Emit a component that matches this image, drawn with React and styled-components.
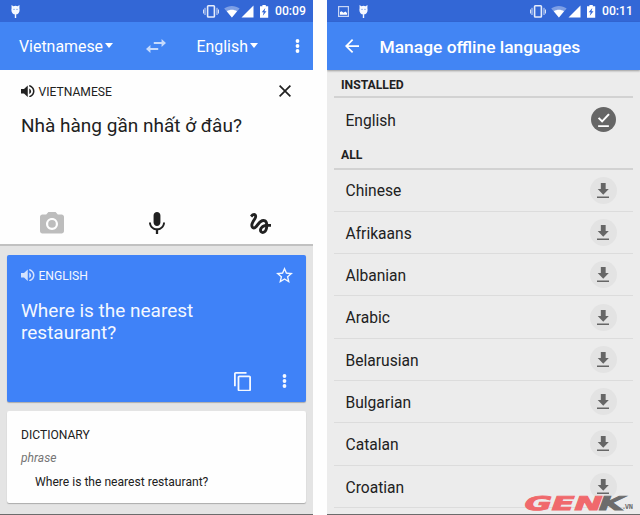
import React from "react";
import styled, { createGlobalStyle } from "styled-components";

const GlobalStyle = createGlobalStyle`
  * { box-sizing: border-box; }
  body { margin: 0; background: #fefefe; font-family: Roboto, "Noto Sans", sans-serif; color: #212121; overflow: hidden; }
  svg { display: block; flex: none; }
`;

const Page = styled.div`
  display: flex;
  justify-content: space-between;
  width: 640px;
  height: 515px;
  overflow: hidden;
`;

const Phone = styled.section`
  position: relative;
  display: flex;
  flex-direction: column;
  width: 313px;
  height: 515px;
  overflow: hidden;
  background: ${(p) => p.$bg};
  border-bottom: 1px solid #6c6c6c;
`;

const StatusBar = styled.div`
  display: flex;
  flex: none;
  align-items: center;
  height: 22px;
  padding: 0 8px 0 11px;
  background: #3367d6;
  color: #fff;
`;

const Notifications = styled.div`
  display: flex;
  align-items: center;
  gap: 10px;
  margin-right: auto;
`;

const Clock = styled.span`
  width: 30px;
  margin-left: 5px;
  font-size: 12.2px;
  font-weight: 500;
  line-height: 23px;
  white-space: nowrap;
`;

const AppBar = styled.header`
  position: relative;
  display: flex;
  flex: none;
  align-items: center;
  height: 48px;
  padding: 0 13px 0 18px;
  background: #4285f4;
  color: #fff;
  box-shadow: ${(p) => (p.$raised ? "0 1px 2px rgba(0,0,0,.35)" : "none")};
`;

const LanguagePicker = styled.div`
  display: flex;
  align-items: center;
  gap: 2px;
  width: ${(p) => p.$width}px;
  margin-left: ${(p) => p.$offset || 0}px;
  padding-top: 2px;
  font-size: 15.9px;
  line-height: 20px;
  white-space: nowrap;
`;

const Caret = styled.i`
  margin-top: -3px;
  border: 4.5px solid transparent;
  border-top: 5px solid #fff;
  border-bottom: 0;
`;

const SwapSlot = styled.div`
  margin-left: 10px;
`;

const MoreSlot = styled.div`
  margin-left: auto;
`;

const Title = styled.h1`
  margin: 1px 0 0 20.5px;
  font-size: 17.4px;
  font-weight: 500;
  line-height: 24px;
  white-space: nowrap;
`;

const SourcePane = styled.div`
  display: flex;
  flex: none;
  flex-direction: column;
  height: 176px;
  padding: 11px 21px 0;
  background: #fefefe;
  border-bottom: 2px solid #c1c1c1;
`;

const LabelRow = styled.div`
  display: flex;
  align-items: center;
  gap: 4px;
  height: 20px;
  font-size: 12.1px;
  line-height: 20px;
`;

const LabelText = styled.span`
  padding-top: 1px;
`;

const LabelAction = styled.div`
  margin-left: auto;
  margin-right: ${(p) => p.$inset || 0}px;
`;

const Phrase = styled.p`
  margin: ${(p) => p.$top}px 0 0;
  font-size: ${(p) => p.$size}px;
  line-height: ${(p) => p.$line}px;
`;

const InputTools = styled.div`
  display: flex;
  align-items: center;
  justify-content: space-between;
  height: 22px;
  margin: auto 21px 10px 19px;
`;

const Results = styled.div`
  display: flex;
  flex-direction: column;
  gap: 9px;
  padding: 9px 7px 0;
`;

const TranslationCard = styled.article`
  display: flex;
  flex-direction: column;
  height: 147px;
  padding: 10px 13px 11px 14px;
  border-radius: 2px;
  background: #3f82f8;
  color: #f4f8ff;
  box-shadow: 0 1px 1px rgba(0, 0, 0, 0.25);
`;

const CardActions = styled.div`
  display: flex;
  align-items: center;
  justify-content: flex-end;
  gap: 31px;
  margin: auto 6px 0 0;
`;

const DictionaryCard = styled.article`
  height: 92px;
  padding: 14px 14px;
  border-radius: 2px;
  background: #fefefe;
  box-shadow: 0 1px 1px rgba(0, 0, 0, 0.25);
  font-size: 12.1px;
  line-height: 20px;
`;

const WordClass = styled.div`
  margin-top: 3px;
  color: #757575;
  font-style: italic;
`;

const Meaning = styled.div`
  margin: 4px 0 0 14px;
`;

const LanguageList = styled.div`
  padding: 0 7px;
`;

const GroupHeading = styled.h2`
  height: ${(p) => p.$height}px;
  margin: 0;
  padding: ${(p) => p.$top}px 7px 0;
  border-bottom: 2px solid #d2d2d2;
  font-size: 12.2px;
  font-weight: 700;
  line-height: 16px;
`;

const LanguageRow = styled.div`
  display: flex;
  align-items: center;
  justify-content: space-between;
  height: ${(p) => (p.$last ? 44.5 : 42.3)}px;
  padding: ${(p) => (p.$last ? 0 : 1)}px 16.5px 0 11.5px;
  border-bottom: ${(p) => (p.$last ? 0 : 1)}px solid #dcdcdc;
  font-size: 15.6px;
  line-height: 20px;
`;

const LanguageName = styled.span`
  padding-top: 1.6px;
`;

const StatusDisc = styled.div`
  display: grid;
  place-items: center;
  width: 27px;
  height: 27px;
  margin-top: -1px;
  border-radius: 50%;
  background: ${(p) => (p.$plain ? "transparent" : "#e3e3e3")};
  color: #666;
`;

const Watermark = styled.div`
  position: absolute;
  left: 192px;
  top: 490px;
`;

const Glyph = ({ box, w, h, d, color = "currentColor", children }) => (
  <svg width={w} height={h} viewBox={box} fill={color} preserveAspectRatio="none">
    {d && <path d={d} />}
    {children}
  </svg>
);

const Speaker = ({ color }) => (
  <Glyph color={color} box="3 3.2 18 17.6" w={13.5} h={12.5} d="M3 9v6h4l5 5V4L7 9H3zm13.5 3c0-1.77-1.02-3.29-2.5-4.03v8.05c1.48-.73 2.5-2.25 2.5-4.02zM14 3.23v2.06c2.89.86 5 3.54 5 6.71s-2.11 5.85-5 6.71v2.06c4.01-.91 7-4.49 7-8.77s-2.99-7.86-7-8.77z" />
);

const MoreDots = ({ color }) => (
  <Glyph box="0 0 5 14" w={5} h={14} color={color}>
    <circle cx="2.5" cy="2" r="1.9" />
    <circle cx="2.5" cy="7" r="1.9" />
    <circle cx="2.5" cy="12" r="1.9" />
  </Glyph>
);

const RobotIcon = () => (
  <Glyph box="0 0 9 13" w={9} h={13} color="#f5f8ff">
    <path d="M.5 0 2.4 1.3a5 5 0 0 1 4.2 0L8.5 0 8.4 3.2C9.2 6.6 7.6 9.4 4.5 9.4S-.2 6.6.6 3.2zM3.8 9h1.4v4H3.8z" />
    <circle cx="3" cy="4.2" r=".55" fill="#3367d6" />
    <circle cx="6" cy="4.2" r=".55" fill="#3367d6" />
  </Glyph>
);

const PictureIcon = () => (
  <svg width="11" height="11" viewBox="0 0 11 11">
    <rect x=".6" y=".6" width="9.8" height="9.8" fill="none" stroke="#c8d6f5" strokeWidth="1.2" />
    <path d="M2 8.8V6l1.6-.8 1.8 1.6L7.4 5.6 9 7v1.8z" fill="#fff" />
  </svg>
);

const SystemIcons = () => (
  <svg width="67" height="13" viewBox="0 0 67 13" fill="#fff">
    <rect x="4.6" y=".8" width="6.8" height="11.2" rx=".8" fill="none" stroke="#e7edfb" strokeWidth="1.6" />
    <path d="M2 2.8v7.2M14 2.8v7.2M.5 4.5v4M15.5 4.5v4" stroke="#d5e0f8" strokeWidth="1" />
    <path d="M21.2 3.6C25.5.1 32.3.1 36.6 3.6L28.9 12.5z" fill="#7e9fe5" />
    <path d="M23.8 6.3c2.9-2 7.3-2 10.2 0l-5.1 6.2z" />
    <path d="M38.5 12.5H50.5V.5z" />
    <path d="M57 1.2h2.4V0h3.4v1.2h2.4v11.6H57z" />
    <path d="m62.3 3-3.6 4.3h2l-.9 3.5 3.7-4.5h-2z" fill="#3367d6" />
  </svg>
);

const DownloadIcon = () => (
  <Glyph box="5 3 14 17" w={12.5} h={15} d="M18.2 9.8h-3.5V3H9.3v6.8H5.8l6.2 6.4 6.2-6.4zM5 18.2V20h14v-1.8H5z" />
);

const InstalledIcon = () => (
  <Glyph box="2 2 20 20" w={25} h={25}>
    <circle cx="12" cy="12" r="10" fill="#666" />
    <path d="M16.3 16.5v1.4H7.7v-1.4zM10.9 14.6 7.5 11.2l1.1-1.1 2.3 2.3 4.9-5.3L17 8.2z" fill="#fff" />
  </Glyph>
);

const Status = ({ time, picture }) => (
  <StatusBar>
    <Notifications>
      {picture && <PictureIcon />}
      <RobotIcon />
    </Notifications>
    <SystemIcons />
    <Clock>{time}</Clock>
  </StatusBar>
);

const languages = ["Chinese", "Afrikaans", "Albanian", "Arabic", "Belarusian", "Bulgarian", "Catalan", "Croatian"];

const TranslateScreen = () => (
  <Phone $bg="#e4e4e4">
    <Status time="00:09" />
    <AppBar>
      <LanguagePicker $width={117} $offset={1}>Vietnamese<Caret /></LanguagePicker>
      <SwapSlot>
        <Glyph box="3 5 18 14" w={20} h={14} color="#c6dafc" d="M6.99 11L3 15l3.99 4v-3H14v-2H6.99v-3zM21 9l-3.99-4v3H10v2h7.01v3L21 9z" />
      </SwapSlot>
      <LanguagePicker $width={80} $offset={30.5}>English<Caret /></LanguagePicker>
      <MoreSlot><MoreDots /></MoreSlot>
    </AppBar>
    <SourcePane>
      <LabelRow>
        <Speaker />
        <LabelText>VIETNAMESE</LabelText>
        <LabelAction $inset={1}>
          <Glyph box="5 5 14 14" w={12} h={12} d="M19 6.41L17.59 5 12 10.59 6.41 5 5 6.41 10.59 12 5 17.59 6.41 19 12 13.41 17.59 19 19 17.59 13.41 12z" />
        </LabelAction>
      </LabelRow>
      <Phrase $top={13} $size={19} $line={23}>Nhà hàng gần nhất ở đâu?</Phrase>
      <InputTools>
        <Glyph box="2 2 20 18" w={24} h={21.5} color="#bdbdbd">
          <circle cx="12" cy="12" r="3.2" />
          <path d="M9 2L7.17 4H4c-1.1 0-2 .9-2 2v12c0 1.1.9 2 2 2h16c1.1 0 2-.9 2-2V6c0-1.1-.9-2-2-2h-3.17L15 2H9zm3 15c-2.76 0-5-2.24-5-5s2.24-5 5-5 5 2.24 5 5-2.24 5-5 5z" />
        </Glyph>
        <Glyph box="5 2 14 19" w={16} h={22} d="M12 14c1.66 0 2.99-1.34 2.99-3L15 5c0-1.66-1.34-3-3-3S9 3.34 9 5v6c0 1.66 1.34 3 3 3zm5.3-3c0 3-2.54 5.1-5.3 5.1S6.7 14 6.7 11H5c0 3.41 2.72 6.23 6 6.72V21h2v-3.28c3.28-.48 6-3.3 6-6.72h-1.7z" />
        <Glyph box="2.8 3 18.2 18" w={21} h={21} d="M4.59 6.89c.7-.71 1.4-1.35 1.71-1.22.5.2 0 1.03-.3 1.52-.25.42-2.86 3.89-2.86 6.31 0 1.28.48 2.34 1.34 2.98.75.56 1.74.73 2.64.46 1.07-.31 1.95-1.4 3.06-2.77 1.21-1.49 2.83-3.44 4.08-3.44 1.63 0 1.65 1.01 1.76 1.79-3.78.64-5.38 3.67-5.38 5.37 0 1.7 1.44 3.09 3.21 3.09 1.63 0 4.29-1.33 4.69-6.1H21v-2.5h-2.47c-.15-1.65-1.09-4.2-4.03-4.2-2.25 0-4.18 1.91-4.94 2.84-.58.73-2.06 2.48-2.29 2.72-.25.3-.68.84-1.11.84-.45 0-.72-.83-.36-1.92.35-1.09 1.4-2.86 1.85-3.52.78-1.14 1.3-1.92 1.3-3.28C8.95 3.69 7.31 3 6.44 3 5.12 3 3.97 4 3.72 4.25c-.36.36-.66.66-.88.93l1.75 1.71zm9.29 11.66c-.31 0-.74-.26-.74-.72 0-.6.73-2.2 2.87-2.76-.3 2.69-1.43 3.48-2.13 3.48z" />
      </InputTools>
    </SourcePane>
    <Results>
      <TranslationCard>
        <LabelRow>
          <Speaker color="#d3e2fd" />
          <LabelText>ENGLISH</LabelText>
          <LabelAction>
            <Glyph box="2 2 20 19" w={17} h={16} d="M22 9.24l-7.19-.62L12 2 9.19 8.63 2 9.24l5.46 4.73L5.82 21 12 17.27 18.18 21l-1.63-7.03L22 9.24zM12 15.4l-3.76 2.27 1-4.28-3.32-2.88 4.38-.38L12 6.1l1.71 4.04 4.38.38-3.32 2.88 1 4.28L12 15.4z" />
          </LabelAction>
        </LabelRow>
        <Phrase $top={15} $size={19} $line={22}>Where is the nearest<br />restaurant?</Phrase>
        <CardActions>
          <Glyph box="2 1 19 22" w={17} h={19.5} d="M16 1H4c-1.1 0-2 .9-2 2v14h2V3h12V1zm3 4H8c-1.1 0-2 .9-2 2v14c0 1.1.9 2 2 2h11c1.1 0 2-.9 2-2V7c0-1.1-.9-2-2-2zm0 16H8V7h11v14z" />
          <MoreDots />
        </CardActions>
      </TranslationCard>
      <DictionaryCard>
        <div>DICTIONARY</div>
        <WordClass>phrase</WordClass>
        <Meaning>Where is the nearest restaurant?</Meaning>
      </DictionaryCard>
    </Results>
  </Phone>
);

const OfflineScreen = () => (
  <Phone $bg="#ececec">
    <Status time="00:11" picture />
    <AppBar $raised>
      <Glyph box="4 4 16 16" w={14} h={14} d="M20 11H7.83l5.59-5.59L12 4l-8 8 8 8 1.41-1.41L7.83 13H20v-2z" />
      <Title>Manage offline languages</Title>
    </AppBar>
    <LanguageList>
      <GroupHeading $height={28} $top={7}>INSTALLED</GroupHeading>
      <LanguageRow $last>
        <LanguageName>English</LanguageName>
        <StatusDisc $plain><InstalledIcon /></StatusDisc>
      </LanguageRow>
      <GroupHeading $height={27} $top={4.7}>ALL</GroupHeading>
      {languages.map((name) => (
        <LanguageRow key={name}>
          <LanguageName>{name}</LanguageName>
          <StatusDisc><DownloadIcon /></StatusDisc>
        </LanguageRow>
      ))}
    </LanguageList>
    <Watermark>
      <svg width="121" height="24" viewBox="0 0 121 24" fontFamily="DejaVu Sans, sans-serif" fontWeight="700">
        <g transform="translate(0 19.6) skewX(-20)" fontSize="19" strokeWidth=".9">
          <text x="3" y="0" fill="#f0696c" stroke="#f0696c" textLength="78" lengthAdjust="spacingAndGlyphs">GEN</text>
          <text x="77.5" y="0" fill="#6c6c6c" stroke="#6c6c6c" textLength="25" lengthAdjust="spacingAndGlyphs">K</text>
        </g>
        <text x="104" y="19.4" fontSize="7" fill="#6c6c6c" textLength="10" lengthAdjust="spacingAndGlyphs">.VN</text>
      </svg>
    </Watermark>
  </Phone>
);

export default function App() {
  return (
    <>
      <GlobalStyle />
      <Page>
        <TranslateScreen />
        <OfflineScreen />
      </Page>
    </>
  );
}
